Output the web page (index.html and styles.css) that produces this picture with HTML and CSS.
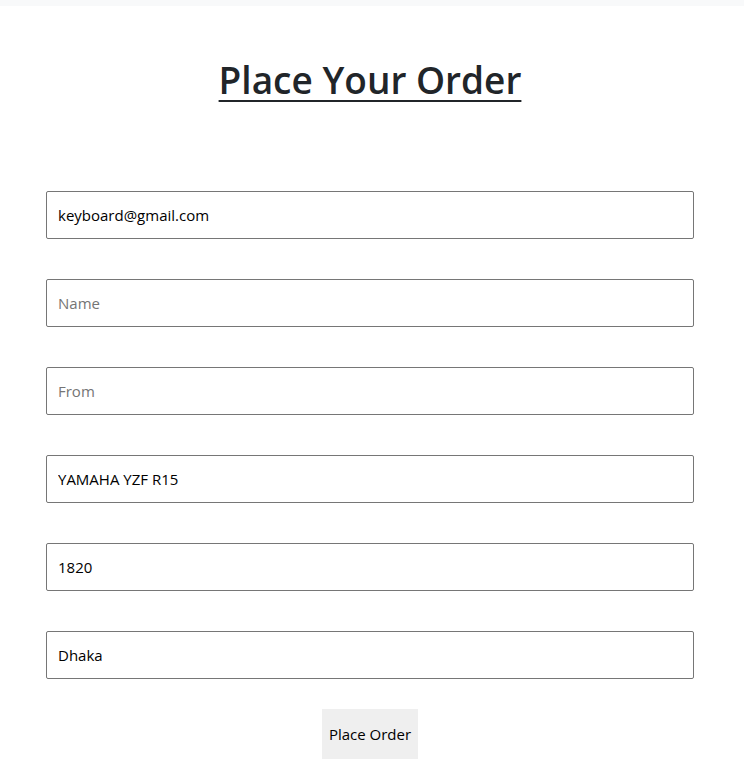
FILE: index.html
```html
<!DOCTYPE html>
<html lang="en">
<head>
<meta charset="utf-8">
<title>Place Your Order</title>
<link rel="stylesheet" href="styles.css">
</head>
<body>
<div class="topbar"></div>
<main class="page">
  <h1 class="title">Place Your Order</h1>
  <form class="order-form">
    <input class="field" type="email" value="keyboard@gmail.com">
    <input class="field" type="text" placeholder="Name">
    <input class="field" type="text" placeholder="From">
    <input class="field" type="text" value="YAMAHA YZF R15">
    <input class="field" type="text" value="1820">
    <input class="field" type="text" value="Dhaka">
    <button class="submit" type="button">Place Order</button>
  </form>
</main>
</body>
</html>
```
FILE: styles.css
```css
html, body {
  margin: 0;
  padding: 0;
  background: #fff;
}
body {
  font-family: "Open Sans", "Noto Sans", sans-serif;
  color: #212529;
}
.topbar {
  height: 6px;
  background: #f8f9fa;
}
.page {
  padding: 0 50px 0 46px;
}
.title {
  margin: 50px 0 0;
  text-align: center;
  font-size: 37px;
  font-weight: 600;
  line-height: 48px;
  text-decoration: underline;
  text-decoration-thickness: 2px;
  text-underline-offset: 6px;
}
.order-form {
  margin-top: 87px;
  display: flex;
  flex-direction: column;
  gap: 40px;
  align-items: center;
}
.field {
  box-sizing: border-box;
  width: 648px;
  height: 48px;
  padding: 0 11px;
  border: 1px solid #767676;
  border-radius: 2px;
  font-family: "Open Sans", "Noto Sans", sans-serif;
  font-size: 15px;
  color: #000;
  background: #fff;
  outline: none;
}
.field::placeholder {
  color: #757575;
}
.submit {
  margin-top: -10px;
  height: 50px;
  padding: 0 7px;
  border: none;
  background: #efefef;
  font-family: "Open Sans", "Noto Sans", sans-serif;
  font-size: 15px;
  color: #000;
}
```
